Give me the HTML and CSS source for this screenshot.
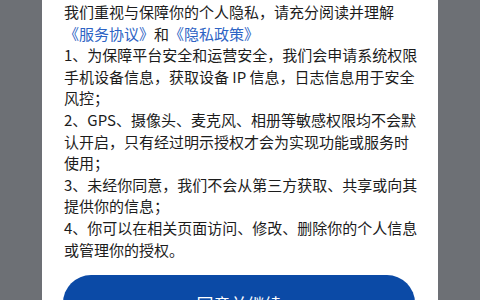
FILE: index.html
```html
<!DOCTYPE html>
<html lang="zh-CN">
<head>
    <meta charset="UTF-8">
    <meta name="viewport" content="width=device-width, initial-scale=1.0">
    <title>个人隐私保护</title>
    <link rel="stylesheet" href="styles.css">
</head>
<body>

    <div class="dialog">
        <div class="dialog-body">
            <p>我们重视与保障你的个人隐私，请充分阅读并理解<a href="#" class="link">《服务协议》</a>和<a href="#" class="link">《隐私政策》</a></p>
            <p>1、为保障平台安全和运营安全，我们会申请系统权限手机设备信息，获取设备 IP 信息，日志信息用于安全风控；</p>
            <p>2、GPS、摄像头、麦克风、相册等敏感权限均不会默认开启，只有经过明示授权才会为实现功能或服务时使用；</p>
            <p>3、未经你同意，我们不会从第三方获取、共享或向其提供你的信息；</p>
            <p>4、你可以在相关页面访问、修改、删除你的个人信息或管理你的授权。</p>
        </div>
        <button class="btn-agree">同意并继续</button>
    </div>

</body>
</html>
```

FILE: styles.css
```css
body {
    font-family: "Noto Sans CJK SC", "Noto Sans", sans-serif;
    background-color: #6d7075;
    margin: 0;
    padding: 0;
    overflow: hidden;
}
.dialog {
    width: 396px;
    margin-left: 42px;
    background: #fff;
    padding: 1px 18px 0 22px;
    box-sizing: border-box;
    min-height: 340px;
}
.dialog-body p {
    margin: 0;
    font-size: 15px;
    line-height: 21.6px;
    color: #1c1c1c;
}
.link {
    display: inline-block;
    color: #2d63c4;
    text-decoration: none;
}
.btn-agree {
    display: block;
    width: 352px;
    height: 56px;
    margin-top: 15px;
    margin-left: -1px;
    border: none;
    border-radius: 28px;
    background: #0b4aa6;
    color: #fff;
    font-family: inherit;
    font-size: 17px;
}
```
